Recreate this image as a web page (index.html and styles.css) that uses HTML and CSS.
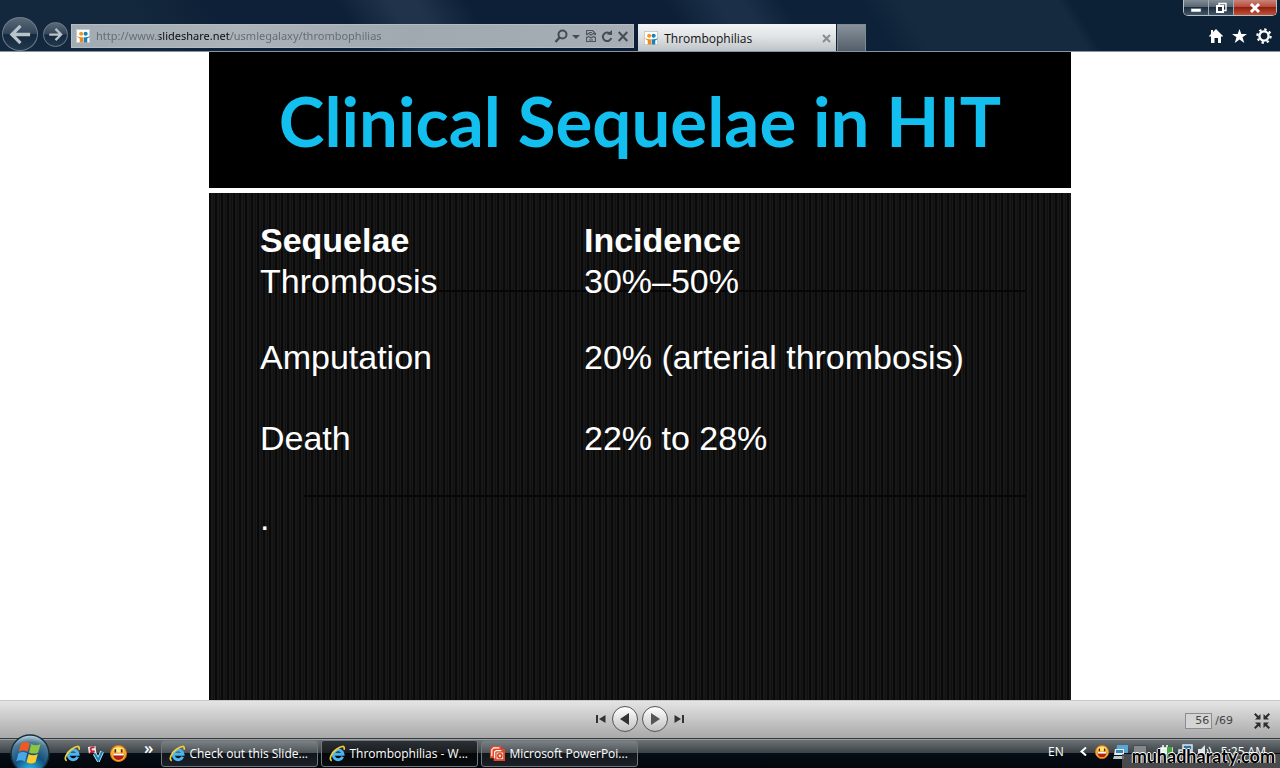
FILE: index.html
```html
<!DOCTYPE html>
<html lang="en">
<head>
<meta charset="utf-8">
<title>Thrombophilias</title>
<link rel="stylesheet" href="styles.css">
</head>
<body>
<svg class="defs" aria-hidden="true">
  <defs>
    <symbol id="share" viewBox="0 0 16 16">
      <rect x="0.5" y="0.5" width="14" height="14" fill="#fff" stroke="#c3cad0"/>
      <circle cx="5.5" cy="5" r="2.2" fill="#f39a22"/><circle cx="10.3" cy="5" r="2.2" fill="#1583b8"/>
      <path d="M1 7.5q3 2 6.6 1.2v5.8H4V10Q1.800 9.500 1 7.500z" fill="#ef8a1f"/>
      <path d="M15 7.500q-3 2-6.800 1.200v5.800H12V10Q14.200 9.500 15 7.500z" fill="#1b80b4"/>
    </symbol>
    <symbol id="ie" viewBox="0 0 18 18">
      <path d="M14.500 12.500A5.200 5.200 0 1 1 14.900 9.800H5.500" fill="none" stroke="#4cb5ee" stroke-width="3"/>
      <path d="M3 16.500C-1 15.500 3 8 8 4.500S17 0 16 5" fill="none" stroke="#f2cf3a" stroke-width="1.800"/>
    </symbol>
    <symbol id="smile" viewBox="0 0 16 16">
      <circle cx="8" cy="8" r="7.500" fill="#fbb62b" stroke="#d9731a"/>
      <ellipse cx="8" cy="4.500" rx="5" ry="2.500" fill="#ffe680"/>
      <path d="M5 4v3M11 4v3" stroke="#4a2500" stroke-width="1.600"/>
      <path d="M2.500 8h11q-.5 6-5.500 6T2.500 8z" fill="#b71e12"/><path d="M3 8h10v1.800H3z" fill="#fff"/>
    </symbol>
  </defs>
</svg>

<header class="chrome">
  <nav class="nav">
    <button class="round back" aria-label="Back"><svg viewBox="0 0 24 24"><path d="M22 12H4M12 3l-9 9 9 9" fill="none" stroke="#b9c3ca" stroke-width="3.400"/></svg></button>
    <button class="round forward" aria-label="Forward"><svg viewBox="0 0 24 24"><path d="M2 12h18M12 3l9 9-9 9" fill="none" stroke="#b9c3ca" stroke-width="3.600"/></svg></button>
  </nav>
  <div class="address">
    <svg class="favicon"><use href="#share"/></svg>
    <input class="url" type="text" aria-label="Address" value="http://www.slideshare.net/usmlegalaxy/thrombophilias">
    <button aria-label="Search"><svg width="28" height="14" viewBox="0 0 28 14"><circle cx="9.500" cy="5.500" r="4" fill="none" stroke="#444d54" stroke-width="2"/><path d="M6.500 8.500L2.500 13" stroke="#444d54" stroke-width="2.400"/><path d="M19 6h8l-4 4z" fill="#444d54"/></svg></button>
    <button aria-label="Compatibility view"><svg width="10" height="12" viewBox="0 0 10 12"><path d="M.5 5V.5h6l3 3V5M.5 7v4.500h9V7M0 5l2.500-1.500L5 5l2.500-1.500L10 5M0 8l2.500-1.500L5 8l2.500-1.500L10 8M3 10h4M3 2.500h3" fill="none" stroke="#4e575e" stroke-width="1.200"/></svg></button>
    <button aria-label="Refresh"><svg width="12" height="13" viewBox="0 0 12 13"><path d="M9.500 4A4.300 4.300 0 1 0 10.300 8" fill="none" stroke="#444d54" stroke-width="2"/><path d="M6 4.500L11 0v5z" fill="#444d54"/></svg></button>
    <button aria-label="Stop"><svg width="10" height="11" viewBox="0 0 10 11"><path d="M.7 1l8.600 9M9.300 1L.7 10" stroke="#444d54" stroke-width="2"/></svg></button>
  </div>
  <div class="tab">
    <svg class="favicon"><use href="#share"/></svg>
    <span class="tab-title">Thrombophilias</span>
    <button aria-label="Close tab"><svg width="9" height="9" viewBox="0 0 9 9"><path d="M1 1l7 7M8 1L1 8" stroke="#888d91" stroke-width="2"/></svg></button>
  </div>
  <button class="new-tab" aria-label="New tab"></button>
  <div class="corner">
    <div class="window-buttons">
      <button aria-label="Minimize"><svg width="12" height="12" viewBox="0 0 12 12"><rect x="1" y="6.500" width="10" height="3.500" fill="#fff" stroke="#536170" stroke-width=".6"/></svg></button>
      <button aria-label="Restore"><svg width="12" height="12" viewBox="0 0 12 12"><path d="M4 3V1.500h7v7H9" fill="none" stroke="#fff" stroke-width="1.400"/><rect x="2" y="4" width="6" height="6" fill="none" stroke="#fff" stroke-width="2"/></svg></button>
      <button class="close" aria-label="Close"><svg width="12" height="12" viewBox="0 0 12 12"><path d="M2 2l8 8M10 2l-8 8" stroke="#fff" stroke-width="3"/></svg></button>
    </div>
    <div class="tools">
      <button aria-label="Home"><svg width="14" height="14" viewBox="0 0 14 14"><path d="M7 0l7 7-1 1-1-1v7H9V9H5.500v5H2V7L1 8 0 7l2-2V1h2v2z" fill="#fff"/></svg></button>
      <button aria-label="Favorites"><svg width="15" height="14" viewBox="0 0 15 14"><path d="M7.500 0l1.800 5H15l-4.500 3.300 1.800 5.700-4.800-3.500L2.700 14l1.800-5.700L0 5h5.700z" fill="#fff"/></svg></button>
      <button aria-label="Tools"><svg width="16" height="16" viewBox="0 0 16 16"><circle cx="8" cy="8" r="4.600" fill="none" stroke="#fff" stroke-width="2.400"/><circle cx="8" cy="8" r="6.600" fill="none" stroke="#fff" stroke-width="2.200" stroke-dasharray="2.400 2.784"/></svg></button>
    </div>
  </div>
</header>

<main class="viewer">
  <article class="slide">
    <h1>Clinical Sequelae in HIT</h1>
    <div class="slide-body">
      <table>
        <thead><tr><th>Sequelae</th><th>Incidence</th></tr></thead>
        <tbody>
          <tr class="r1"><td>Thrombosis</td><td>30%–50%</td></tr>
          <tr class="r2"><td>Amputation</td><td>20% (arterial thrombosis)</td></tr>
          <tr class="r3"><td>Death</td><td>22% to 28%</td></tr>
          <tr><td>.</td><td></td></tr>
        </tbody>
      </table>
    </div>
  </article>
</main>

<section class="player" aria-label="Slide controls">
  <div class="transport">
    <button aria-label="First slide"><svg width="10" height="8" viewBox="0 0 10 8"><path d="M0 0h2v8H0zM9.500 0v8L3 4z" fill="#333"/></svg></button>
    <button class="disc" aria-label="Previous slide"><svg width="10" height="12" viewBox="0 0 10 12"><path d="M9 0v12L0 6z" fill="#333"/></svg></button>
    <button class="disc" aria-label="Next slide"><svg width="10" height="12" viewBox="0 0 10 12"><path d="M1 0v12l9-6z" fill="#555"/></svg></button>
    <button aria-label="Last slide"><svg width="10" height="8" viewBox="0 0 10 8"><path d="M8 0h2v8H8zM.5 0v8L7 4z" fill="#333"/></svg></button>
  </div>
  <div class="pages">
    <input type="text" id="page" value="56" aria-label="Page"><label for="page">/69</label>
    <button class="shrink" aria-label="Exit full screen"><svg width="16" height="16" viewBox="0 0 16 16"><path d="M6.500 1v5.500H1l2-2L0 1.500 1.500 0l3 3zM9.500 1v5.500H15l-2-2 3-3L14.500 0l-3 3zM6.500 15V9.500H1l2 2-3 3L1.500 16l3-3zM9.500 15V9.500H15l-2 2 3 3-1.500 1.500-3-3z" fill="#2e2e2e"/></svg></button>
  </div>
</section>

<footer class="taskbar">
  <button class="start" aria-label="Start"><svg viewBox="0 0 40 40">
    <defs><radialGradient id="orb" cx=".5" cy=".95" r=".95"><stop offset="0" stop-color="#27c4f5"/><stop offset=".45" stop-color="#12507e"/><stop offset=".8" stop-color="#4f7c96"/><stop offset="1" stop-color="#c4dce6"/></radialGradient></defs>
    <circle cx="20" cy="20" r="19" fill="url(#orb)" stroke="#16303f" stroke-width="1.500"/>
    <path d="M11 9.500q4.500-2.800 8.800 0l-2.200 8.200q-4.400-2.400-8.800 0z" fill="#ee5a26"/>
    <path d="M21.300 10q4.400 2.400 9.200 0l-2.300 8.400q-4.400 2.400-9.200 0z" fill="#8cc63e"/>
    <path d="M8.400 19.300q4.400-2.400 8.800 0L15 27.500q-4.400-2.600-8.800 0z" fill="#4aa6e6"/>
    <path d="M18.700 20q4.400 2.400 9.100 0l-2.300 8.300q-4.400 2.500-9 0z" fill="#fccb2c"/>
  </svg></button>
  <div class="quick">
    <button aria-label="Internet Explorer"><svg><use href="#ie"/></svg></button>
    <button aria-label="Viewer"><svg viewBox="0 0 18 18"><path d="M1 2l8-1 1 8-5-1-3 1z" fill="#e8eef2"/><path d="M8 2.500Q3 2 4 5t4 1M3 8l5-1" fill="none" stroke="#d0202c" stroke-width="2"/><path d="M8 9l4 7 4-9" fill="none" stroke="#d7edf7" stroke-width="4"/><path d="M8 9l4 7 4-9" fill="none" stroke="#1684b5" stroke-width="2.400"/></svg></button>
    <button aria-label="Messenger"><svg><use href="#smile"/></svg></button>
  </div>
  <button class="more" aria-label="More">»</button>
  <div class="tasks">
    <button class="task"><svg><use href="#ie"/></svg>Check out this Slide...</button>
    <button class="task active"><svg><use href="#ie"/></svg>Thrombophilias - W...</button>
    <button class="task"><svg viewBox="0 0 18 18"><path d="M1 4l3-3h9v3h3l1 1v12H5v-3H1z" fill="#e04a2b"/><path d="M3 12V5l2-2h6M6 14V7l2-1h5" fill="none" stroke="#fff" stroke-width="1.200"/><path d="M8 8h7v7H8z" fill="#f9dcd3"/><circle cx="11.500" cy="11.500" r="2.200" fill="none" stroke="#cf3d20" stroke-width="1.500"/></svg>Microsoft PowerPoi...</button>
  </div>
  <div class="tray">
    <span class="lang">EN</span>
    <button class="expand" aria-label="Show hidden icons"><svg width="7" height="9" viewBox="0 0 7 9"><path d="M6 .5l-4.500 4L6 8.500" fill="none" stroke="#fff" stroke-width="2"/></svg></button>
    <svg width="14" height="14"><use href="#smile"/></svg>
    <svg width="16" height="16" viewBox="0 0 16 16"><path d="M4 1h11v8H3z" fill="#5ba7d3"/><path d="M2 5h9v6H1z" fill="#e1edf3"/><path d="M3 6h7v3H3z" fill="#3b82ad"/><path d="M1 12h10v3H0z" fill="#b9c9d0"/></svg>
    <svg width="14" height="14" viewBox="0 0 14 14"><path d="M.5 .5h13v13H.5z" fill="#85888a" stroke="#4a4d50"/></svg>
    <svg class="power" width="15" height="16" viewBox="0 0 15 16"><path d="M2 4h11v11H2zM4 1v3M8 1v3" fill="#e8f2e7" stroke="#fff" stroke-width="1.500"/><path d="M8 3h5v12H8z" fill="#41a63e"/></svg>
    <svg width="15" height="16" viewBox="0 0 15 16"><path d="M5 1h9v9H5zM1 6h8v7H1z" fill="#2d76a8" stroke="#dbe9ef" stroke-width="1.500"/></svg>
    <svg width="16" height="16" viewBox="0 0 16 16"><path d="M1 5h3l4-4v14l-4-4H1z" fill="#dfe5e7"/><path d="M10 5q2 3 0 6M12 3q4 5 0 10" fill="none" stroke="#dfe5e7" stroke-width="1.300"/></svg>
    <time>5:25 AM</time>
  </div>
  <span class="watermark">muhadharaty.com</span>
</footer>
</body>
</html>
```
FILE: styles.css
```css
* { box-sizing: border-box; }

body {
  margin: 0;
  min-height: 100vh;
  display: flex;
  flex-direction: column;
  background: #fff;
  font: 12px/16px "Open Sans", "Noto Sans", sans-serif;
}

button {
  display: flex;
  align-items: center;
  justify-content: center;
  padding: 0;
  border: 0;
  background: none;
  color: inherit;
  font: inherit;
}

.defs { position: absolute; width: 0; height: 0; }

/* Browser frame */
.chrome {
  display: flex;
  align-items: flex-end;
  height: 52px;
  border-bottom: 1px solid #8195a3;
  background: linear-gradient(58deg, #14283d 0 12%, #0d2037 18% 28%, #20334a 32% 34%, #0c1f36 38% 53%, #1b3048 57% 59%, #0d2138 62% 68%, #15293f 71% 83%, #0d2136 84%);
}

.nav { display: flex; align-items: center; gap: 5px; padding-left: 2px; width: 71px; }

.round {
  flex: none;
  border: 1px solid #6c7c8b;
  border-radius: 50%;
  background: linear-gradient(#5a6978, #33465a 48%, #14283c 52%, #22384d);
}
.back { width: 36px; height: 34px; }
.back svg { width: 23px; height: 23px; }
.forward { width: 25px; height: 25px; }
.forward svg { width: 15px; height: 15px; }

.address {
  display: flex;
  align-items: center;
  gap: 5px;
  width: 44%;
  height: 24px;
  margin-bottom: 3px;
  padding: 0 5px 0 4px;
  border: 1px solid #b3bcc3;
  background: linear-gradient(90deg, #a2abb2, #acb3b9 30%, #a0a9b0 60%, #a7aeb5);
}

.favicon { flex: none; width: 15px; height: 15px; }

.url {
  flex: 1;
  min-width: 0;
  padding: 0;
  border: 0;
  outline: 0;
  font: 11px/16px "Noto Sans", sans-serif;
  color: transparent;
  background: linear-gradient(90deg, #626a71 63px, #0b0d0f 63px 134px, #626a71 134px);
  -webkit-background-clip: text;
  background-clip: text;
}

.tab {
  display: flex;
  align-items: center;
  gap: 5px;
  width: 198px;
  height: 27px;
  margin-left: 4px;
  padding: 2px 5px 0 6px;
  background: linear-gradient(#f2f4f5, #dfe2e4 50%, #bec3c7);
  color: #111;
}
.tab-title { flex: 1; }

.new-tab {
  width: 29px;
  height: 27px;
  margin-left: 1px;
  border: 1px solid #7f8a93;
  border-bottom: 0;
  background: linear-gradient(#89929a, #525e69);
}

.corner {
  display: flex;
  flex-direction: column;
  align-items: flex-end;
  justify-content: space-between;
  align-self: stretch;
  margin-left: auto;
  padding: 0 3px 7px 0;
}

.window-buttons {
  display: flex;
  border: 1px solid #b5c0c8;
  border-top: 0;
  border-radius: 0 0 5px 5px;
  overflow: hidden;
}
.window-buttons button {
  width: 25px;
  height: 15px;
  border-right: 1px solid #a0abb4;
  background: linear-gradient(#818c96, #596774 45%, #1c2c3c 50%, #43576a);
}
.window-buttons .close {
  width: 42px;
  border: 0;
  background: linear-gradient(#c88479, #b84c3c 45%, #90210f 50%, #c55236);
}

.tools { display: flex; align-items: center; gap: 9px; padding-right: 5px; }

/* Slide */
.viewer {
  flex: 1;
  display: grid;
  grid-template-columns: 209fr 862fr 209fr;
}

.slide { grid-column: 2; display: flex; flex-direction: column; background: #000; }

h1 {
  margin: 0;
  padding: 23px 0 21px;
  border-bottom: 5px solid #fff;
  color: #12bfee;
  font: 700 69px/92px Lato, "Noto Sans", sans-serif;
  text-align: center;
  white-space: nowrap;
}

.slide-body {
  flex: 1;
  padding: 27px 51px 0;
  background:
    linear-gradient(#060606, #060606) 95px 97px / calc(100% - 141px) 2px no-repeat,
    linear-gradient(#060606, #060606) 95px 302px / calc(100% - 141px) 2px no-repeat,
    repeating-linear-gradient(90deg, #090909 0 2px, #181818 2px 4px, #101010 4px 5px, #191919 5px 6px);
  color: #fff;
  font: 34px/40px "Liberation Sans", Arial, sans-serif;
}

table { width: 100%; border-collapse: collapse; }
th, td { padding: 0; text-align: left; vertical-align: top; }
th { height: 41px; }
th:first-child { width: 324px; }
.r1 { height: 76px; }
.r2 { height: 81px; }
.r3 { height: 80px; }

/* Slide controls */
.player {
  display: grid;
  grid-template-columns: 1fr auto 1fr;
  align-items: center;
  height: 38px;
  padding-bottom: 2px;
  border-top: 1px solid #c9c9c9;
  background: linear-gradient(#e4e4e4, #a9a9a9);
}
.transport { grid-column: 2; display: flex; align-items: center; gap: 8px; }
.transport .disc {
  width: 26px;
  height: 26px;
  margin: 0 -2px;
  border: 1px solid #555;
  border-radius: 50%;
  background: linear-gradient(#fff, #c2c2c2);
}

.pages {
  display: flex;
  align-items: center;
  justify-content: flex-end;
  gap: 3px;
  padding: 4px 10px 0 0;
  color: #444;
  font: 11px/14px "DejaVu Sans", sans-serif;
}
.pages input {
  width: 27px;
  height: 16px;
  padding: 0 2px;
  border: 1px solid #8c8c8c;
  background: #d4d4d4;
  color: #444;
  font: inherit;
  text-align: right;
}
.shrink { margin-left: 18px; }

/* Taskbar */
.taskbar {
  position: relative;
  display: flex;
  align-items: center;
  height: 30px;
  border-top: 1px solid #33393d;
  background: linear-gradient(#9a9fa2 0 1px, #6b7174 1px, #3c4347 48%, #060d14 50%, #02070c);
  color: #fff;
}

.start { flex: none; width: 40px; height: 28px; margin-left: 10px; }
.start svg { flex: none; width: 40px; height: 40px; }

.quick { display: flex; gap: 6px; margin-left: 14px; }
.quick svg { width: 17px; height: 17px; }

.more { margin: -12px 8px 0 17px; font-size: 17px; font-weight: 600; }

.tasks { display: flex; gap: 3px; }
.task {
  justify-content: flex-start;
  gap: 3px;
  width: 157px;
  height: 27px;
  padding: 0 7px;
  border: 1px solid #6f777c;
  border-radius: 3px;
  background: linear-gradient(#7b8184, #4b5154 48%, #10161c 50%, #1b2127);
  white-space: nowrap;
}
.task.active { background: linear-gradient(#2b3034, #1a1d20 48%, #040608 50%, #0b0e11); }
.task svg { flex: none; width: 17px; height: 17px; }

.tray {
  display: flex;
  align-items: center;
  gap: 4px;
  height: 22px;
  margin: 0 14px 4px auto;
}
.lang { margin-right: 12px; }
.expand { margin-right: 4px; }
.power { margin-left: 8px; }
.tray time { margin-left: 4px; }

.watermark {
  position: absolute;
  right: 0;
  bottom: 0;
  width: 158px;
  height: 14px;
  padding-right: 5px;
  background: rgba(90, 90, 90, .8);
  color: #000;
  font: 700 18px/4px Lato, sans-serif;
  text-align: right;
  text-shadow: 1px 0 #fff, 0 -1px #fff, -1px 0 #ddd;
}
```
